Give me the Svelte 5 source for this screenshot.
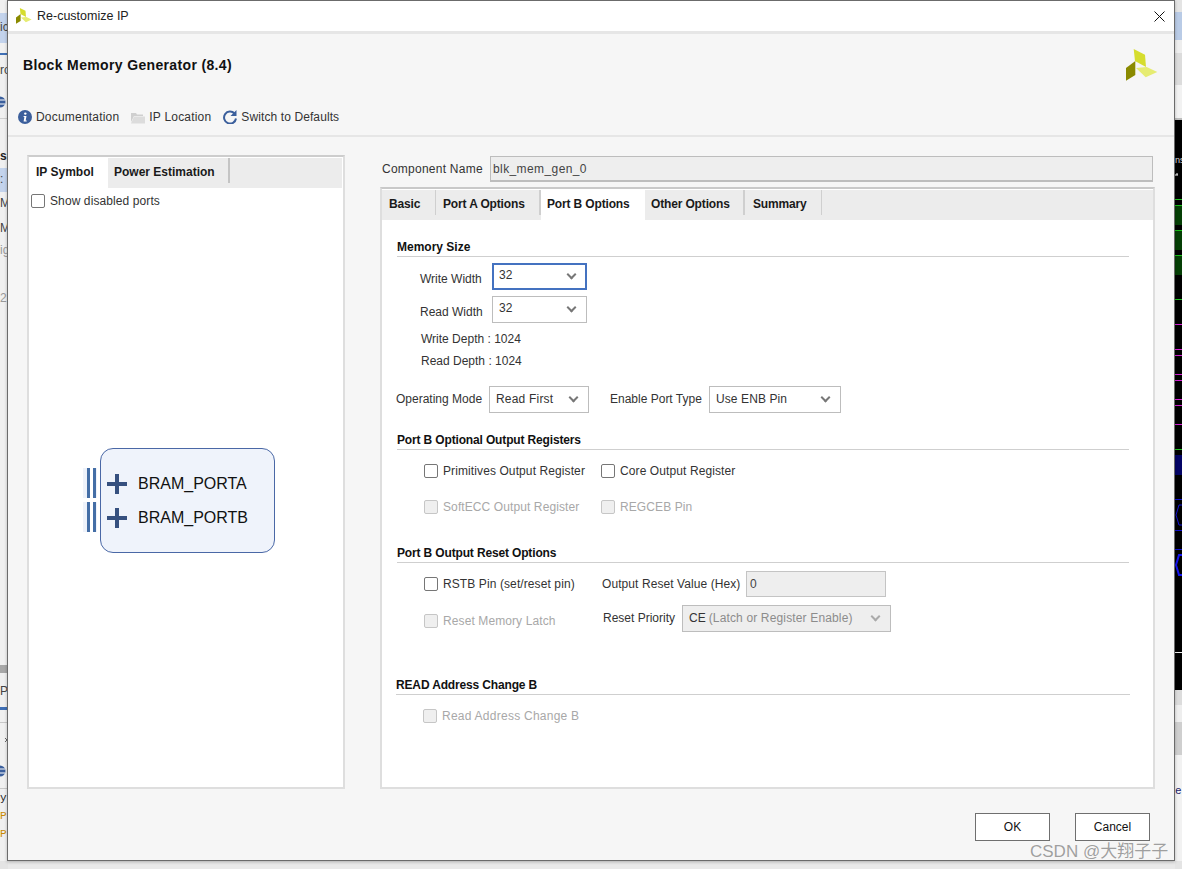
<script>
  const logo = {
    top: "M7.700 0 19 5.700 20 18 9 12z",
    dark: "M0 19 9.300 12 9.300 26 0 31.700z",
    lite: "M10 19 20.700 18 31.300 23 19.700 28.300z"
  };
  const green = [199, 299, 449];
  const magenta = [324, 349, 355, 374, 380, 399, 405, 424];
  const blue = [499, 530, 549];
</script>

<div class="desk">
  <div class="strip-left">
    <div class="sl a"></div><div class="sl b"></div><div class="sl i"></div><div class="sl c"></div><div class="sl d"></div>
    <div class="sl e"></div><div class="sl f"></div><div class="sl g"></div><div class="sl h"></div>
    <svg class="behind" viewBox="0 0 8 869" width="8" height="869">
      <circle cx="0" cy="102" r="5.500" fill="#3b5f9c"/><path d="M0 100h5M0 104h5" stroke="#fff"/>
      <circle cx="0" cy="771" r="5.500" fill="#3b5f9c"/><path d="M0 769h5M0 773h5" stroke="#fff"/>
      <path d="M5 738l2 2-2 2" fill="none" stroke="#666"/>
    </svg>
    <span class="frag" style="top:20px">ic</span>
    <span class="frag" style="top:63px">ro</span>
    <span class="frag bold" style="top:149px">si</span>
    <span class="frag" style="top:172px">:</span>
    <span class="frag" style="top:196px">M</span>
    <span class="frag" style="top:221px">M</span>
    <span class="frag grey" style="top:243px">ig</span>
    <span class="frag grey" style="top:291px">2</span>
    <span class="frag" style="top:684px">P</span>
    <span class="frag mono" style="top:791px">y</span>
    <span class="frag mono amber" style="top:809px">P</span>
    <span class="frag mono amber" style="top:827px">P</span>
  </div>
  <div class="strip-right">
    <div class="sr top"></div>
    <svg class="wave" viewBox="0 0 7 570" width="7" height="570">
      <rect x="0" y="0" width="7" height="570" fill="#000"/>
      <path d="M0 55h3M2 55v-2" stroke="#fff" fill="none"/>
      {#each green as y}<rect x="0" y={y - 120} width="7" height="1" fill="#1fc01f"/>{/each}
      {#each magenta as y}<rect x="0" y={y - 120} width="7" height="1" fill="#d41fd4"/>{/each}
      {#each blue as y}<rect x="0" y={y - 120} width="7" height="1" fill="#1111cc"/>{/each}
      {#each [205, 230, 255] as y}
        <rect x="0" y={y - 120} width="7" height="20" fill="#053f05"/>
        <rect x="0" y={y - 120} width="7" height="1" fill="#18c018"/>
      {/each}
      <rect x="0" y="335" width="7" height="20" fill="#040466"/>
      <path d="M7 385H4L1 395l3 10h3" fill="none" stroke="#1515d8"/>
      <path d="M7 435H4L1 445l3 10h3" fill="none" stroke="#1515f0" stroke-width="2"/>
      <rect x="0" y="532" width="7" height="1" fill="#eee"/>
    </svg>
    <div class="sr low"></div>
    <span class="frag ns">ns</span>
    <span class="frag mono el">el</span>
  </div>

  <div class="window">
    <header class="titlebar">
      <svg class="tlogo" viewBox="0 0 32 32" width="16" height="16"><path d={logo.top} fill="#d6dd2e"/><path d={logo.dark} fill="#8a8a00"/><path d={logo.lite} fill="#e6ec72"/></svg>
      <span>Re-customize IP</span>
      <svg class="close" viewBox="0 0 11 11" width="11" height="11"><path d="M.5.500 10.500 10.500M10.500.500.500 10.500" stroke="#111" stroke-width="1" fill="none"/></svg>
    </header>
    <div class="head">
      <div class="headrow">
        <h1>Block Memory Generator (8.4)</h1>
        <svg class="logo" viewBox="0 0 32 32" width="32" height="32"><path d={logo.top} fill="#d6dd2e"/><path d={logo.dark} fill="#8a8a00"/><path d={logo.lite} fill="#e6ec72"/></svg>
      </div>
      <nav class="tools">
        <span class="tool"><svg viewBox="0 0 14 14" width="14" height="14"><circle cx="7" cy="7" r="7" fill="#3b5f9c"/><circle cx="7.300" cy="3.600" r="1.200" fill="#fff"/><path d="M5.600 6h2.900L7.700 10.500h1v1H5.600L6.400 7H5.600z" fill="#fff"/></svg>Documentation</span>
        <span class="tool gap"><svg viewBox="0 0 14 13" width="14" height="13"><path d="M0 2h5l1 1.500h6V5H3L0 11z" fill="#cfcfcf"/><path d="M0 12.500 3 5.500h11v7z" fill="#dcdcdc"/></svg>IP Location</span>
        <span class="tool gap sw"><svg viewBox="0 0 14 14" width="14" height="14"><path d="M11.500 3.500A6 6 0 1 0 13 8.500" fill="none" stroke="#3b5f9c" stroke-width="2"/><path d="M13.500 0v6h-6z" fill="#3b5f9c"/></svg>Switch to Defaults</span>
      </nav>
    </div>
    <main class="body">
      <section class="leftpane">
        <div class="tabstrip left">
          <span class="tab on ipsym">IP Symbol</span>
          <span class="tab pwr">Power Estimation</span>
        </div>
        <label class="chk show"><i class="box"></i>Show disabled ports</label>
        <div class="symbol">
          <div class="pins">
            <span class="pin"></span>
            <span class="pin"></span>
          </div>
          <div class="block">
            <div class="port"><i class="plus"></i>BRAM_PORTA</div>
            <div class="port"><i class="plus"></i>BRAM_PORTB</div>
          </div>
        </div>
      </section>

      <section class="rightcol">
        <div class="cname"><label for="cn">Component Name</label><div id="cn" class="cinput">blk_mem_gen_0</div></div>
        <div class="tabspane">
          <div class="tabstrip main">
            <span class="tab t1">Basic</span>
            <span class="tab t2">Port A Options</span>
            <span class="tab on t3">Port B Options</span>
            <span class="tab t4">Other Options</span>
            <span class="tab t5">Summary</span>
          </div>
          <div class="page">
            <h2 class="sec s1">Memory Size</h2>
            <div class="frow r1"><span class="lab w1">Write Width</span><span class="sel focus w95">32<b class="chev"></b></span></div>
            <div class="frow r2"><span class="lab w1">Read Width</span><span class="sel w95">32<b class="chev"></b></span></div>
            <div class="depth d1">Write Depth : 1024</div>
            <div class="depth d2">Read Depth : 1024</div>
            <div class="frow r3">
              <span class="lab opm">Operating Mode</span><span class="sel w100">Read First<b class="chev"></b></span>
              <span class="lab enp">Enable Port Type</span><span class="sel w132">Use ENB Pin<b class="chev"></b></span>
            </div>

            <h2 class="sec s2">Port B Optional Output Registers</h2>
            <div class="crow c1"><label class="chk col1"><i class="box"></i>Primitives Output Register</label><label class="chk"><i class="box"></i>Core Output Register</label></div>
            <div class="crow c2"><label class="chk col1 off"><i class="box"></i>SoftECC Output Register</label><label class="chk off"><i class="box"></i>REGCEB Pin</label></div>

            <h2 class="sec s3">Port B Output Reset Options</h2>
            <div class="crow c3"><label class="chk colr"><i class="box"></i>RSTB Pin (set/reset pin)</label><span class="lab orv">Output Reset Value (Hex)</span><span class="ro">0</span></div>
            <div class="crow c4"><label class="chk colr off low2"><i class="box"></i>Reset Memory Latch</label><span class="lab rpr">Reset Priority</span><span class="sel dis">CE <em>(Latch or Register Enable)</em><b class="chev"></b></span></div>

            <h2 class="sec s4">READ Address Change B</h2>
            <div class="crow c5"><label class="chk off"><i class="box"></i>Read Address Change B</label></div>
          </div>
        </div>
      </section>
    </main>
    <footer class="foot">
      <button class="btn">OK</button>
      <button class="btn">Cancel</button>
    </footer>
  </div>
  <div class="mark">CSDN @大翔子子</div>
</div>

<style>
  :global(body) { margin: 0; background: #e9e9e9; }
  .desk { position: relative; width: 1182px; height: 869px; overflow: hidden; font: 12px "Liberation Sans", Arial, sans-serif; color: #1c1c1c; }

  .strip-left { position: absolute; left: 0; top: 0; width: 8px; height: 869px; background: #f0f0f0; overflow: hidden; }
  .behind { position: absolute; left: 0; top: 0; }
  .sl { position: absolute; left: 0; width: 8px; }
  .sl.a { top: 13px; height: 30px; background: #c3d3ec; }
  .sl.b { top: 53px; height: 2px; background: #3f6fb5; }
  .sl.i { top: 118px; height: 1px; background: #cfcfcf; }
  .sl.c { top: 168px; height: 24px; background: #c3d3ec; }
  .sl.d { top: 665px; height: 8px; background: #a8a8a8; }
  .sl.e { top: 707px; height: 3px; background: #3f6fb5; }
  .sl.f { top: 722px; height: 1px; background: #c8c8c8; }
  .sl.g { top: 788px; height: 1px; background: #c8c8c8; }
  .sl.h { top: 861px; height: 8px; background: #e4e4e4; }
  .frag { position: absolute; left: 0; font-size: 12px; line-height: 14px; color: #444; }
  .frag.bold { font-weight: 700; color: #222; }
  .frag.grey { color: #999; }
  .frag.mono { font-family: "Liberation Mono", monospace; font-size: 11px; color: #222; }
  .frag.amber { color: #c98a00; }

  .strip-right { position: absolute; left: 1175px; top: 0; width: 7px; height: 869px; background: #f0f0f0; overflow: hidden; }
  .sr.top { height: 120px; background: linear-gradient(#e4e4e4 0 12px, #b9cbe6 12px 40px, #eee 40px 53px, #dcdcdc 53px 85px, #f2f2f2 85px 118px, #bdbdbd 118px); }
  .wave { display: block; }
  .sr.low { height: 179px; background: linear-gradient(#dcdcdc 0 15px, #eee 15px 32px, #cfcfcf 32px 65px, #f2f2f2 65px 171px, #e4e4e4 171px); }
  .ns { left: 0; top: 153px; color: #ddd; font-size: 9px; }
  .frag.el { left: 0; top: 784px; color: #22226a; }

  .window { box-sizing: border-box; position: absolute; left: 7px; top: 0; width: 1168px; height: 861px; background: #f6f6f6; border: 1px solid #6b6b6b; display: flex; flex-direction: column; box-shadow: 0 1px 3px rgba(0,0,0,.25); }
  .titlebar { flex: none; height: 30px; background: #fff; border-bottom: 3px solid #e6e6e6; display: flex; align-items: center; padding-left: 8px; font-size: 12.500px; color: #222; }
  .tlogo { margin-right: 5px; }
  .close { margin-left: auto; margin-right: 9px; }
  .head { flex: none; height: 101px; border-bottom: 2px solid #e6e6e6; display: flex; flex-direction: column; }
  .headrow { flex: none; height: 73px; display: flex; align-items: flex-start; padding-left: 15px; position: relative; }
  h1 { margin: 23px 0 0; font-size: 14px; font-weight: 700; color: #111; line-height: 16px; letter-spacing: .35px; }
  .logo { position: absolute; right: 16px; top: 15px; }
  .tools { display: flex; align-items: center; padding-left: 10px; height: 20px; font-size: 12px; color: #333; letter-spacing: .2px; }
  .tool { display: inline-flex; align-items: center; gap: 4px; }
  .gap { margin-left: 12px; }
  .sw { letter-spacing: .1px; }

  .body { flex: none; height: 634px; display: flex; padding: 18px 19px 0 19px; }
  .leftpane { width: 314px; height: 630px; background: #fff; border: 2px solid #dedede; border-top-color: #cdcdcd; display: flex; flex-direction: column; }
  .tabstrip { flex: none; display: flex; align-items: flex-start; height: 30px; background: #ececec; margin: 1px 1px 0; box-sizing: border-box; font-weight: 700; color: #1a1a1a; }
  .tab { display: flex; align-items: center; padding-left: 6px; padding-top: 2px; box-sizing: border-box; height: 25px; }
  .tab.on { background: #fff; height: 30px; padding-top: 0; padding-bottom: 3px; }
  .ipsym { width: 78px; }
  .pwr { width: 122px; border-right: 2px solid #c4c4c4; }
  .show { margin: 6px 0 0 2px; letter-spacing: .2px; }
  .chk { display: inline-flex; align-items: center; gap: 5px; color: #333; letter-spacing: .1px; }
  .chk .box { box-sizing: border-box; flex: none; width: 14px; height: 14px; border: 1px solid #767676; border-radius: 2px; background: #fff; display: inline-block; }
  .chk.off { color: #a8a8a8; }
  .chk.off .box { border-color: #c6c6c6; background: #efefef; }

  .symbol { display: flex; margin: 240px 0 0 54px; align-items: flex-start; }
  .pins { width: 18px; display: flex; flex-direction: column; gap: 4px; margin-top: 20px; }
  .pin { display: block; width: 14px; height: 30px; background: linear-gradient(90deg, #eef2fa 0 4px, #446ea6 4px 7.500px, #fff 7.500px 10px, #446ea6 10px 13px, #eef2fa 13px); }
  .block { box-sizing: border-box; width: 175px; height: 105px; margin-left: -1px; border: 1px solid #4a68a6; border-radius: 13px; background: #eff3fb; padding: 18px 0 0 6px; }
  .port { display: flex; align-items: center; height: 34px; font-size: 16px; color: #111; }
  .plus { display: block; width: 20px; height: 20px; margin-right: 11px; background: linear-gradient(#36507f,#36507f) center/20px 4px no-repeat, linear-gradient(#36507f,#36507f) center/4px 20px no-repeat; }

  .rightcol { margin-left: 35px; width: 775px; display: flex; flex-direction: column; }
  .cname { display: flex; align-items: center; height: 26px; margin-top: 1px; flex: none; }
  .cname label { margin-left: 2px; width: 108px; flex: none; color: #333; letter-spacing: .25px; }
  .cinput { box-sizing: border-box; width: 663px; height: 26px; background: #eee; border: 1px solid #bdbdbd; border-width: 1px 1px 2px 1px; padding: 0 2px; line-height: 24px; color: #444; letter-spacing: .4px; }
  .tabspane { box-sizing: border-box; flex: none; margin-top: 5px; width: 775px; height: 602px; border: 2px solid #dedede; background: #fff; border-top-color: #c9c9c9; display: flex; flex-direction: column; }
  .tabstrip.main { margin: 1px 0 0; letter-spacing: -.15px; }
  .t1 { width: 54px; border-right: 1px solid #cfcfcf; padding-left: 7px; }
  .t2 { width: 105px; border-right: 2px solid #cfcfcf; padding-left: 7px; }
  .tab.t3 { width: 104px; }
  .t4 { width: 100px; border-right: 2px solid #cfcfcf; }
  .t5 { width: 77px; border-right: 1px solid #cfcfcf; padding-left: 8px; }
  .page { flex: 1; }
  .sec { margin: 0 0 0 15px; font-size: 12px; font-weight: 700; color: #111; line-height: 14px; border-bottom: 1px solid #cfcfcf; width: 732px; height: 16px; letter-spacing: -.15px; }
  .s1 { margin-top: 20px; letter-spacing: 0; }
  .frow, .crow { display: flex; align-items: center; }
  .lab { color: #333; }
  .w1 { box-sizing: border-box; width: 72px; margin-left: 38px; padding-top: 5px; }
  .sel { position: relative; box-sizing: border-box; flex: none; height: 27px; border: 1px solid #bdbdbd; display: inline-flex; align-items: center; padding-left: 6px; background: #fff; color: #333; padding-bottom: 2px; }
  .sel.focus { border: 2px solid #4472c0; padding-left: 5px; }
  .w95 { width: 95px; padding-bottom: 4px; }
  .w100 { width: 100px; letter-spacing: .2px; }
  .w132 { width: 132px; letter-spacing: .1px; }
  .chev { position: absolute; right: 11px; top: 50%; width: 7px; height: 7px; margin-top: -6px; border-right: 2px solid #777; border-bottom: 2px solid #777; transform: rotate(45deg); box-sizing: border-box; }
  .focus .chev { right: 10px; }
  .r1, .r2 { margin-top: 6px; }
  .depth { margin-left: 39px; color: #333; line-height: 14px; }
  .d1 { margin-top: 9px; }
  .d2 { margin-top: 8px; }
  .r3 { margin-top: 18px; margin-left: 14px; }
  .r3 .lab { padding-bottom: 2px; }
  .opm { width: 93px; }
  .enp { margin-left: 21px; width: 99px; }
  .s2 { margin-top: 20px; }
  .col1 { width: 177px; }
  .crow { padding-left: 42px; }
  .c1 { margin-top: 7px; height: 28px; }
  .c2 { margin-top: 8px; height: 28px; }
  .s3 { margin-top: 25px; }
  .colr { width: 178px; }
  .c3 { margin-top: 7px; height: 27px; }
  .orv { width: 144px; letter-spacing: .08px; }
  .ro { box-sizing: border-box; width: 140px; height: 26px; background: #eee; border: 1px solid #c4c4c4; padding-left: 3px; line-height: 24px; color: #444; }
  .c4 { margin-top: 8px; height: 27px; }
  .low2 { padding-top: 4px; }
  .rpr { width: 79px; margin-left: 1px; padding-bottom: 2px; }
  .sel.dis { width: 209px; background: #eee; color: #333; }
  .sel.dis em { font-style: normal; color: #8c8c8c; margin-left: 3px; letter-spacing: .15px; }
  .sel.dis .chev { border-color: #aaa; }
  .s4 { margin: 46px 0 0 14px; width: 734px; height: 16px; }
  .c5 { margin-top: 14px; padding-left: 41px; }
  .c5 .chk { letter-spacing: .25px; }

  .foot { flex: 1; display: flex; justify-content: flex-end; align-items: flex-start; gap: 25px; padding: 24px 24px 0 0; }
  .btn { box-sizing: border-box; width: 75px; height: 28px; background: #fff; border: 1px solid #6f6f6f; font: 12px "Liberation Sans", Arial, sans-serif; color: #111; padding: 0; }
  .mark { position: absolute; left: 1030px; top: 837px; font: 17px "Liberation Sans", "Noto Sans CJK SC", sans-serif; color: rgba(120,120,120,.7); white-space: nowrap; }
</style>
